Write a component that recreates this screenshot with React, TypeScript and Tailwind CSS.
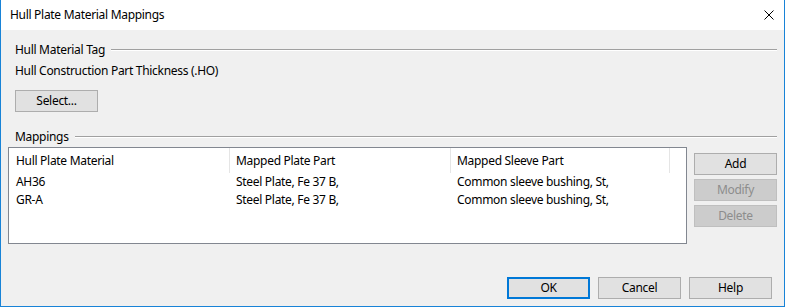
import React from "react";

const font = { fontFamily: '"Noto Sans", "Segoe UI", sans-serif' };

function Btn({ label, disabled, def }: { label: string; disabled?: boolean; def?: boolean }) {
  const base = "h-[22px] w-[83px] flex items-center justify-center text-[12px] leading-none";
  if (disabled) return <div className={`${base} bg-[#cccccc] border border-[#bfbfbf] text-[#8d8d8d]`}>{label}</div>;
  if (def) return <div className={`${base} bg-[#e1e1e1] border-2 border-[#0078d7] text-black`}>{label}</div>;
  return <div className={`${base} bg-[#e1e1e1] border border-[#adadad] text-black`}>{label}</div>;
}

function GroupHeader({ title }: { title: string }) {
  return (
    <div className="flex items-center h-[16px]">
      <span className="pl-[7px] pr-[6px] text-[12px] leading-[16px] text-black">{title}</span>
      <div className="flex-1 h-[2px] border-t border-[#a0a0a0] border-b border-b-white" />
    </div>
  );
}

const rows = [
  ["AH36", "Steel Plate, Fe 37 B,", "Common sleeve bushing, St,"],
  ["GR-A", "Steel Plate, Fe 37 B,", "Common sleeve bushing, St,"],
];

export default function App() {
  return (
    <div style={font} className="w-[785px] h-[307px] flex flex-col bg-[#f0f0f0] border-x border-b border-[#1883d7] text-black overflow-hidden tracking-[-0.3px]">
      <div className="h-[30px] bg-white flex items-center justify-between pl-[9px] pr-[9px] shrink-0">
        <span className="text-[12px] leading-none">Hull Plate Material Mappings</span>
        <svg width="10" height="10" viewBox="0 0 10 10" className="mr-[1px]">
          <path d="M0.5 0.5 L9.5 9.5 M9.5 0.5 L0.5 9.5" stroke="#000" strokeWidth="1" />
        </svg>
      </div>
      <div className="flex flex-col pl-[7px] pr-[7px]">
        <div className="mt-[12px]">
          <GroupHeader title="Hull Material Tag" />
        </div>
        <div className="pl-[7px] mt-[5px] text-[12px] leading-[16px]">Hull Construction Part Thickness (.HO)</div>
        <div className="pl-[7px] mt-[11px]">
          <Btn label="Select..." />
        </div>
        <div className="mt-[17px]">
          <GroupHeader title="Mappings" />
        </div>
        <div className="flex mt-[2px]">
          <div className="w-[679px] h-[97px] bg-white border border-[#828790] text-[12px]">
            <div className="flex h-[25px] items-center">
              <div className="w-[221px] pl-[7px] border-r border-[#e5e5e5] h-full flex items-center">Hull Plate Material</div>
              <div className="w-[221px] pl-[6px] border-r border-[#e5e5e5] h-full flex items-center">Mapped Plate Part</div>
              <div className="w-[219px] pl-[6px] border-r border-[#e5e5e5] h-full flex items-center">Mapped Sleeve Part</div>
            </div>
            {rows.map((r, i) => (
              <div key={i} className="flex h-[18px] items-center">
                <div className="w-[221px] pl-[7px]">{r[0]}</div>
                <div className="w-[221px] pl-[6px]">{r[1]}</div>
                <div className="w-[219px] pl-[6px]">{r[2]}</div>
              </div>
            ))}
          </div>
          <div className="ml-[7px] mt-[6px] flex flex-col gap-[4px]">
            <Btn label="Add" />
            <Btn label="Modify" disabled />
            <Btn label="Delete" disabled />
          </div>
        </div>
        <div className="flex justify-end gap-[8px] mt-[33px] pr-[5px]">
          <Btn label="OK" def />
          <Btn label="Cancel" />
          <Btn label="Help" />
        </div>
      </div>
    </div>
  );
}
